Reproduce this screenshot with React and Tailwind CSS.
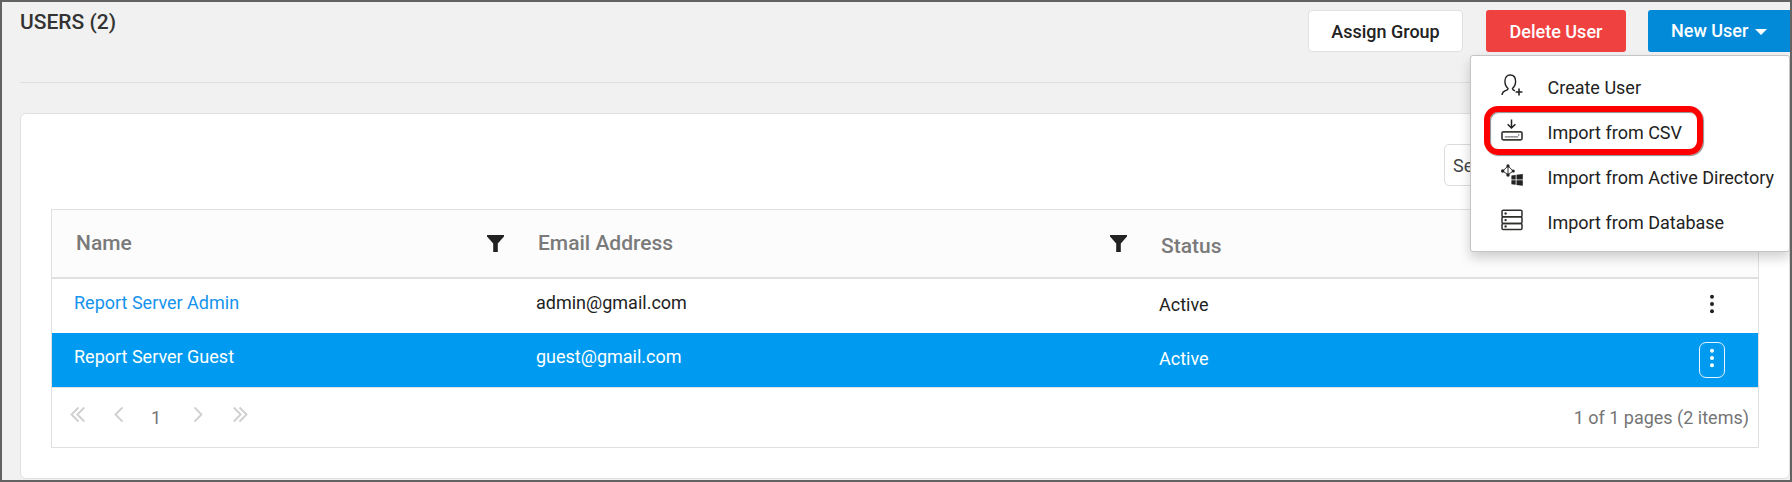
import React from "react";

const FILTER = "M0 0h17v1.6L10.8 8.6V17H6.2V8.6L0 1.6z";

function Filter() {
  return (
    <svg width="17" height="17" viewBox="0 0 17 17" className="shrink-0">
      <path d={FILTER} fill="#222" />
    </svg>
  );
}

function Dots({ className }) {
  return (
    <svg width="6" height="20" viewBox="0 0 6 20" className={className} fill="currentColor">
      <circle cx="3" cy="2.8" r="2" />
      <circle cx="3" cy="10" r="2" />
      <circle cx="3" cy="17.2" r="2" />
    </svg>
  );
}

function Chevron({ d, width, className }) {
  return (
    <svg width={width} height="17" viewBox={`0 -0.5 ${width} 17`} className={className} fill="none" stroke="#cfcfcf" strokeWidth="1.8">
      <path d={d} />
    </svg>
  );
}

function UserIcon() {
  return (
    <svg width="22" height="22" viewBox="0 0 22 22" fill="none" stroke="#222" strokeWidth="1.4">
      <path d="M1 21c.2-2.300 1.400-3.600 3.500-4.300 1.500-.5 2.600-1 2.600-2.200C5 12.800 3.900 10.200 3.900 7.300 3.900 3.300 5.900 1 9.200 1s5.400 2.300 5.400 6.300c0 2.900-1.100 5.500-3.200 7.200 0 1.200.8 1.700 2.600 2.300" />
      <path d="M18 14.600v6.800M14.600 18h6.800" strokeWidth="1.600" />
    </svg>
  );
}

function ImportIcon() {
  return (
    <svg width="22" height="22" viewBox="0 0 22 22" fill="none" stroke="#222" strokeWidth="1.5">
      <path d="M10.500 0.500v8M6.600 5.200l3.900 3.800 3.900-3.800" />
      <rect x="1" y="12.800" width="20" height="8" rx="1.300" stroke="#3c3c38" strokeWidth="1.700" />
      <path d="M3.800 17.800h13.400M17.700 15.300v1.400" stroke="#777" strokeWidth="1.300" />
    </svg>
  );
}

function DirectoryIcon() {
  return (
    <svg width="22" height="22" viewBox="0 0 22 22" fill="#222">
      <path d="M7 2L1.800 7 7 10.800 12.200 7zM7 2v9" fill="none" stroke="#333" strokeWidth="1" />
      <circle cx="7" cy="1.900" r="1.600" />
      <circle cx="1.700" cy="7" r="1.700" />
      <circle cx="12.200" cy="7" r="1.600" />
      <circle cx="7" cy="11" r="1.700" />
      <path d="M10.400 11.500l4.300-.6v4.600h-4.300zM15.500 10.800l6.300-.9v5.600h-6.300zM10.400 16.300h4.300v4.500l-4.300-.6zM15.500 16.300h6.300v5.500l-6.300-.9z" />
    </svg>
  );
}

function DatabaseIcon() {
  return (
    <svg width="22" height="22" viewBox="0 0 22 22" fill="none" stroke="#2e2e2b" strokeWidth="1.500">
      <rect x="1" y="1.200" width="20" height="6.600" rx="1.300" />
      <rect x="1" y="7.800" width="20" height="6.600" rx="1.300" />
      <rect x="1" y="14.400" width="20" height="6.200" rx="1.300" />
      <g stroke="none" fill="#333">
        <circle cx="4.600" cy="4.500" r="1.200" />
        <circle cx="4.600" cy="11.100" r="1.200" />
        <circle cx="4.600" cy="17.400" r="1.200" />
      </g>
    </svg>
  );
}

const MENU = [
  { label: "Create User", Icon: UserIcon },
  { label: "Import from CSV", Icon: ImportIcon, marked: true },
  { label: "Import from Active Directory", Icon: DirectoryIcon },
  { label: "Import from Database", Icon: DatabaseIcon },
];

function Menu() {
  return (
    <ul className="absolute top-[53px] right-0 h-[197px] w-[320px] rounded-[3px] border border-[#c4c4c4] bg-white pt-[9px] shadow-[0_6px_12px_rgba(0,0,0,0.18)]">
      {MENU.map(({ label, Icon, marked }) => (
        <li key={label} className="relative flex h-[45px] items-center pl-[30px]">
          <span className="-mt-[5px]">
            <Icon />
          </span>
          <span className="ml-[24.5px] whitespace-nowrap text-[18px] leading-[21px] text-[#222]">{label}</span>
          {marked && (
            <span className="absolute -top-[4px] left-[13px] h-[49px] w-[219px] rounded-[14px] border-[6px] border-[#fe0000] shadow-[1px_1px_1px_rgba(0,0,0,0.45),inset_1px_1px_1px_rgba(0,0,0,0.45)]" />
          )}
        </li>
      ))}
    </ul>
  );
}

const COLS = "grid grid-cols-[462px_623px_1fr]";

export default function App() {
  return (
    <div className="relative h-[482px] w-[1792px] overflow-hidden border-2 border-[#626262] bg-[#f1f1f1] font-[Roboto,sans-serif] text-[18px] text-[#222]">
      <header className="ml-[18px] flex h-[81px] justify-between border-b border-[#dedede]">
        <h1 className="pt-[6px] text-[21px] leading-[28px] font-medium text-[#333]">USERS (2)</h1>
        <div className="flex pt-2 font-medium">
          <button className="h-[42px] w-[155px] rounded-[4px] border border-[#dee2e6] bg-white">Assign Group</button>
          <button className="ml-[23px] h-[42px] w-[140px] rounded-[3px] bg-[#f04141] text-white">Delete User</button>
          <button className="ml-[22px] flex h-[42px] w-[142px] items-center rounded-l-[3px] bg-[#028ad9] pb-[2px] pl-[23px] text-white">
            New User
            <svg width="12" height="6" viewBox="0 0 12 6" className="mt-[3px] ml-[7px]">
              <path d="M0 0h12L6 6z" fill="#fff" />
            </svg>
          </button>
        </div>
      </header>

      <main className="mt-[30px] ml-[18px] h-[366px] w-[1770px] rounded-[6px] border border-[#dbe0e4] bg-white px-[30px] pt-[30px]">
        <div className="flex justify-end pr-[1px]">
          <div className="flex h-[42px] w-[314px] items-center rounded-[5px] border border-[#dcdcdc] pl-2 text-[#444]">Search</div>
        </div>
        <section className="mt-[23px] h-[239px] w-[1708px] border border-[#e0e0e0]">
          <div className={`${COLS} h-[69px] border-b-2 border-[#e0e0e0] bg-[#fcfcfc] pl-[24px] text-[21px] leading-[24px] font-medium text-[#7a7a7a]`}>
            <div className="flex items-start pt-[21px]">
              <span className="w-[411px]">Name</span>
              <span className="pt-[4px]"><Filter /></span>
            </div>
            <div className="flex items-start pt-[21px]">
              <span className="w-[572px]">Email Address</span>
              <span className="pt-[4px]"><Filter /></span>
            </div>
            <div className="pt-[24px]">Status</div>
          </div>
          <div className={`${COLS} h-[54px] pl-[22px]`}>
            <div className="pt-[14px] leading-[20px] text-[#1593ed]">Report Server Admin</div>
            <div className="pt-[14px] leading-[20px]">admin@gmail.com</div>
            <div className="flex items-start justify-between pt-[16px] pr-[43px] leading-[20px]">
              Active
              <Dots className="-mt-[1px]" />
            </div>
          </div>
          <div className={`${COLS} h-[54px] bg-[#009bf0] pl-[22px] text-white`}>
            <div className="pt-[14px] leading-[20px]">Report Server Guest</div>
            <div className="pt-[14px] leading-[20px]">guest@gmail.com</div>
            <div className="flex items-start justify-between pr-[33px] leading-[20px]">
              <span className="pt-[16px]">Active</span>
              <span className="mt-[9px] flex h-[36px] w-[26px] justify-center rounded-[7px] border border-white/90 pt-[5px]">
                <Dots />
              </span>
            </div>
          </div>
          <footer className="flex h-[60px] items-start border-t border-[#e0e0e0] pt-[18px] pr-[9px] leading-[21px] text-[#757575]">
            <Chevron width={15} className="ml-[18px]" d="M8.500 1L1.500 8l7 7M14.300 1L7.300 8l7 7" />
            <Chevron width={9} className="ml-[29px]" d="M8.500 1L1.500 8l7 7" />
            <span className="ml-[28px] w-[10px] pt-[1px]">1</span>
            <Chevron width={9} className="ml-[33px]" d="M.5 1l7 7-7 7" />
            <Chevron width={15} className="ml-[30px]" d="M.7 1l7 7-7 7M6.500 1l7 7-7 7" />
            <span className="ml-auto pt-[1px]">1 of 1 pages (2 items)</span>
          </footer>
        </section>
      </main>

      <Menu />
    </div>
  );
}
